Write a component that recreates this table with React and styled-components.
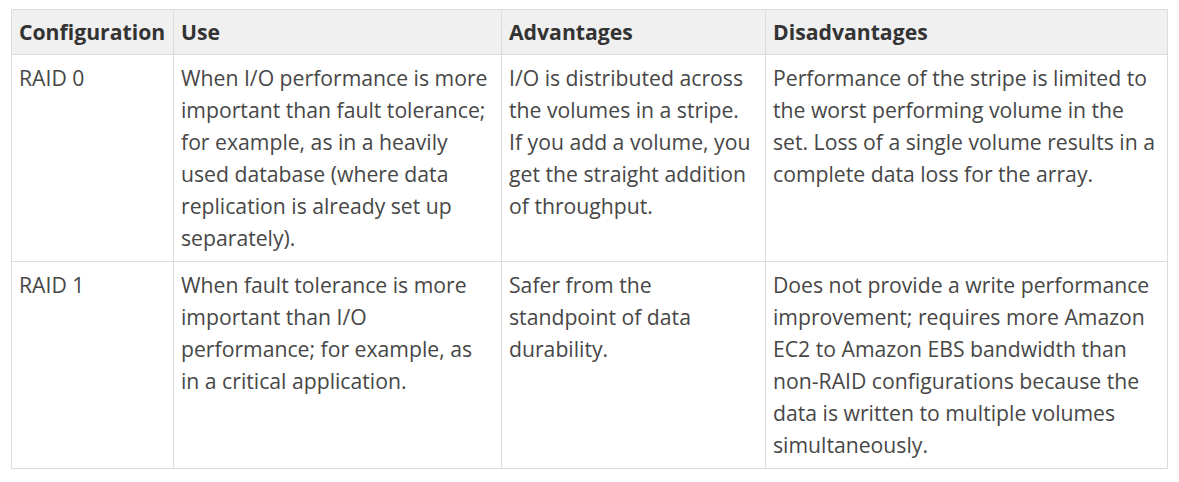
import styled, { createGlobalStyle } from 'styled-components';

const GlobalStyle = createGlobalStyle`
  body {
    margin: 0;
    background: #ffffff;
    font-family: "Open Sans", "Noto Sans", sans-serif;
  }
`;

const columns = [
    { title: 'Configuration', width: 162 },
    { title: 'Use', width: 328 },
    { title: 'Advantages', width: 264 },
    { title: 'Disadvantages', width: 402 },
];

const rows = [
    [
        'RAID 0',
        'When I/O performance is more important than fault tolerance; for example, as in a heavily used database (where data replication is already set up separately).',
        'I/O is distributed across the volumes in a stripe. If you add a volume, you get the straight addition of throughput.',
        'Performance of the stripe is limited to the worst performing volume in the set. Loss of a single volume results in a complete data loss for the array.',
    ],
    [
        'RAID 1',
        'When fault tolerance is more important than I/O performance; for example, as in a critical application.',
        'Safer from the standpoint of data durability.',
        'Does not provide a write performance improvement; requires more Amazon EC2 to Amazon EBS bandwidth than non-RAID configurations because the data is written to multiple volumes simultaneously.',
    ],
];

const App = () => {
    return (
        <Page>
            <GlobalStyle />
            <Table>
                <colgroup>
                    {columns.map((col) => (
                        <col key={col.title} style={{ width: col.width }} />
                    ))}
                </colgroup>
                <thead>
                    <tr>
                        {columns.map((col) => (
                            <Th key={col.title}>{col.title}</Th>
                        ))}
                    </tr>
                </thead>
                <tbody>
                    {rows.map((row) => (
                        <tr key={row[0]}>
                            {row.map((cell, i) => (
                                <Td key={i}>{cell}</Td>
                            ))}
                        </tr>
                    ))}
                </tbody>
            </Table>
        </Page>
    );
};

export default App;

const Page = styled.div`
    padding: 9px 0 0 11px;
`;

const Table = styled.table`
    width: 1157px;
    table-layout: fixed;
    border-collapse: collapse;
    border: 1px solid #dcdcdc;
    color: #474747;
    font-size: 21.2px;
    line-height: 32px;
`;

const Th = styled.th`
    background: #f0f0f0;
    border: 1px solid #dcdcdc;
    padding: 6px 7px;
    text-align: left;
    font-weight: 700;
    color: #333333;
`;

const Td = styled.td`
    border: 1px solid #dcdcdc;
    padding: 7px 9px 7px 7px;
    vertical-align: top;
    text-align: left;
`;
